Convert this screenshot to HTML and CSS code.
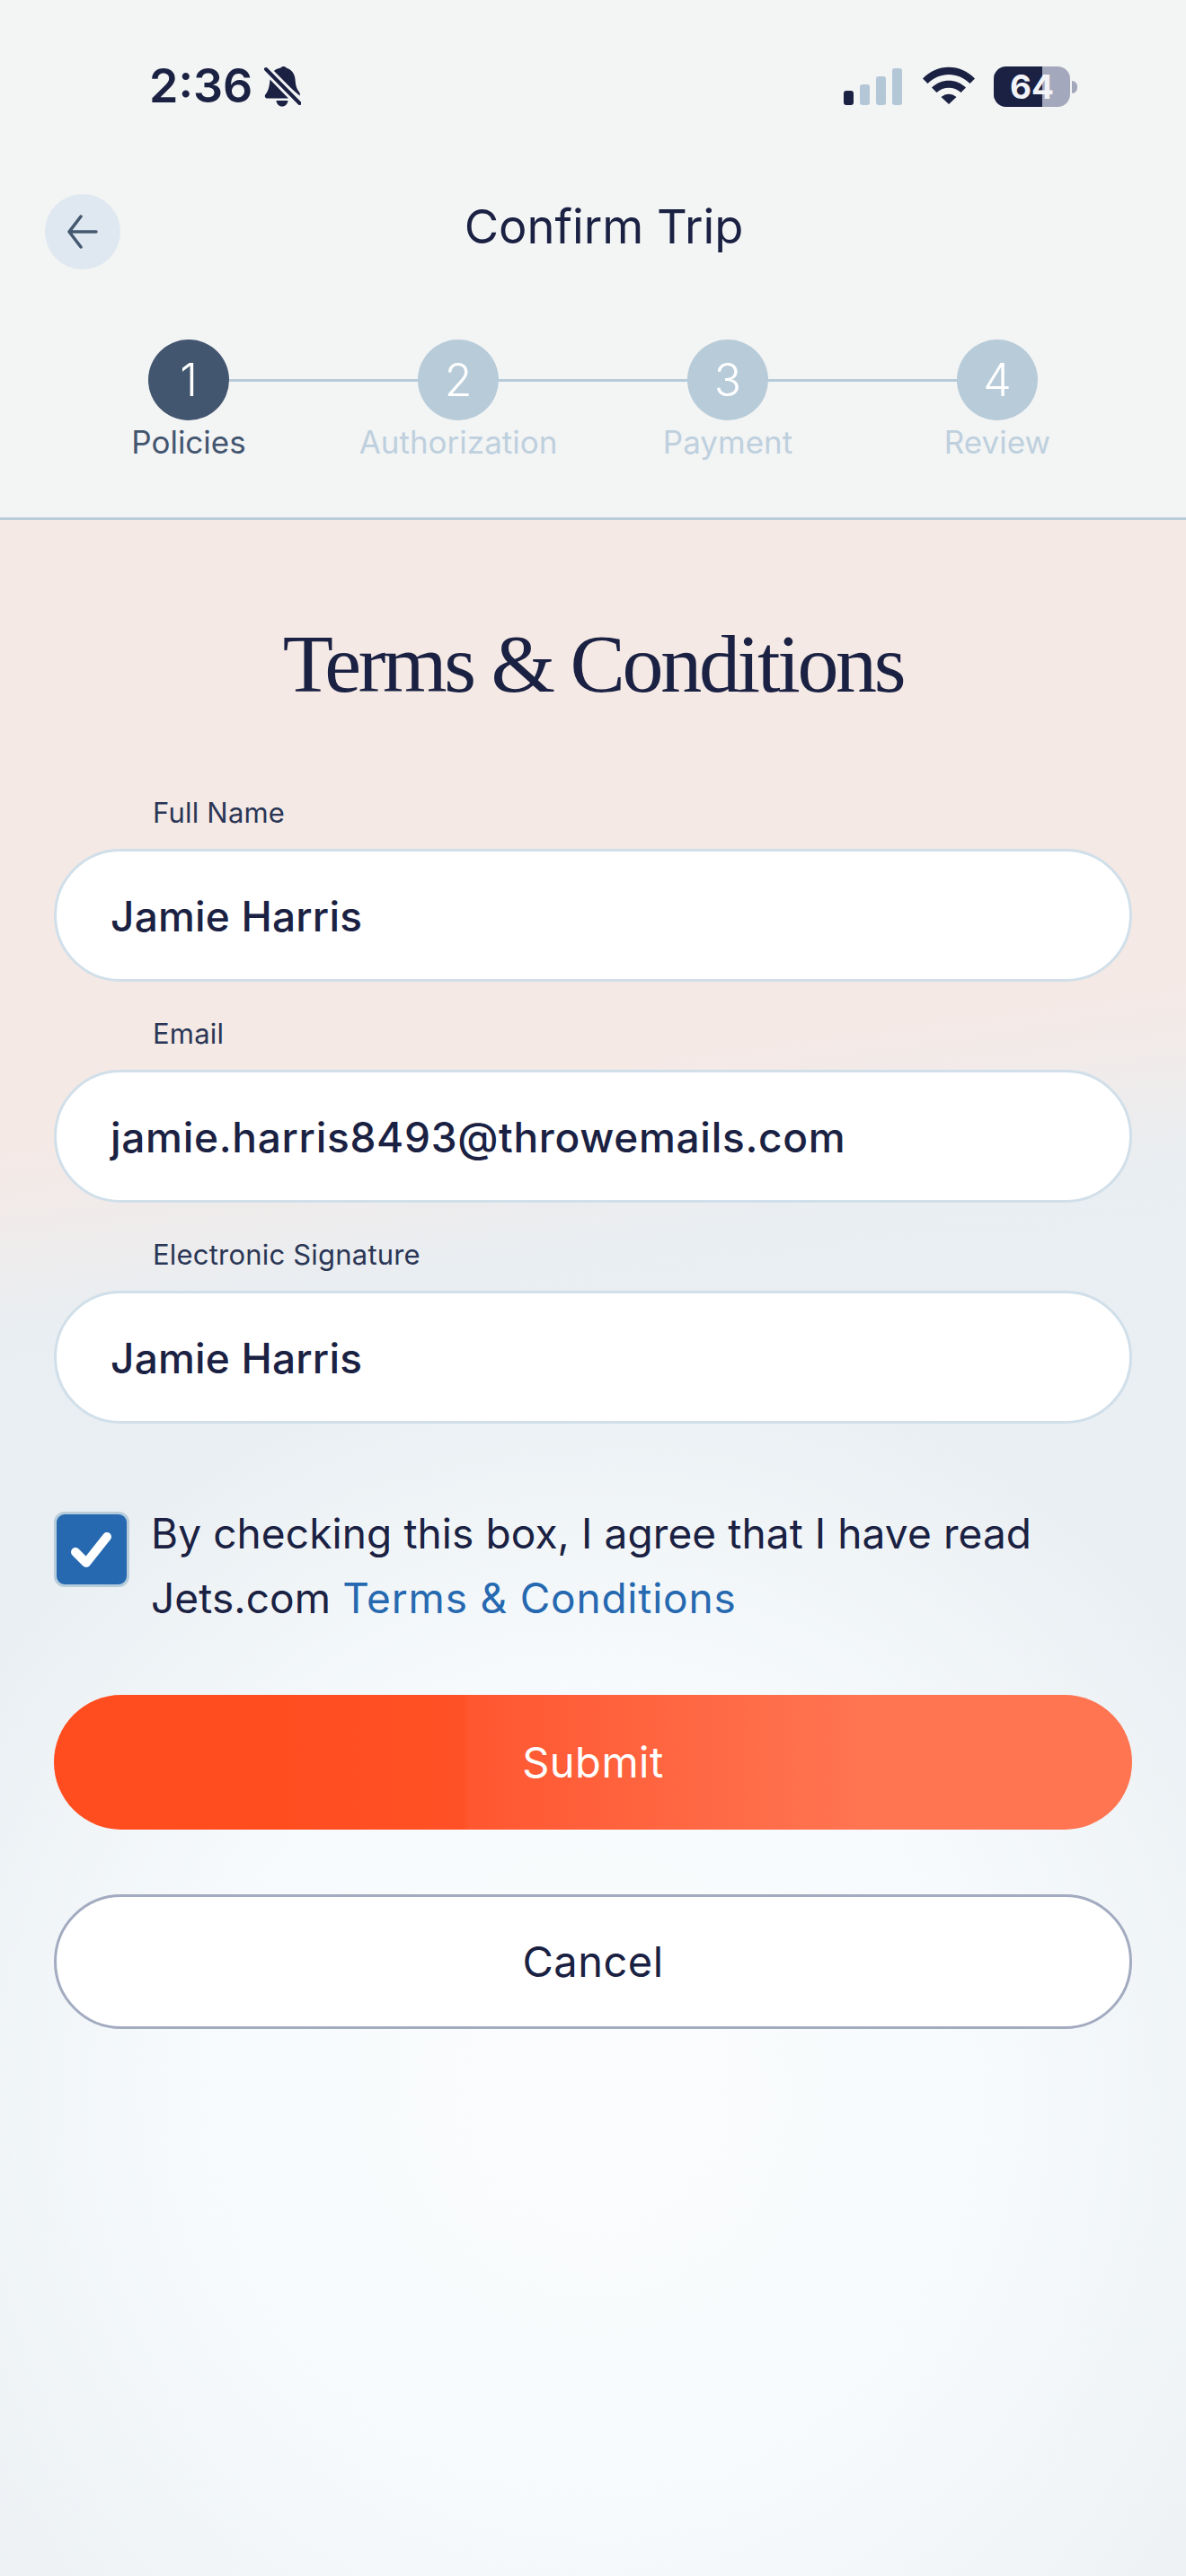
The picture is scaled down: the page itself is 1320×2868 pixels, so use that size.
FILE: index.html
```html
<!DOCTYPE html>
<html lang="en">
<head>
<meta charset="utf-8">
<title>Confirm Trip</title>
<link rel="stylesheet" href="styles.css">
</head>
<body>
<div class="phone">
  <header class="head">
    <div class="status">
      <div class="status-left">
        <span class="time">2:36</span>
        <svg class="bell" viewBox="0 0 41 46" aria-hidden="true">
          <path class="bell-body" d="M9 7C11 4 15 2 18.500 1.500c1.500-2 5-2 6 0C30 3 34 8 34.500 14c.5 6 1 10 4.500 14.500 1 1.500 1 3 .5 4Z"/>
          <path class="bell-body" d="M6.500 14.500 27 35.500H3.500C1 35.500 0 33 1.500 31 5 27 6 21 6.500 14.500Z"/>
          <path class="bell-body" d="M13.500 38h13c-.5 4-3 6.500-6.500 6.500S14 42 13.500 38Z"/>
          <path class="bell-gap" d="M6 3 41 38"/>
          <path class="bell-slash" d="M2 3 39.500 41"/>
        </svg>
      </div>
      <div class="status-right">
        <div class="signal">
          <span class="bar bar-1"></span>
          <span class="bar bar-2"></span>
          <span class="bar bar-3"></span>
          <span class="bar bar-4"></span>
        </div>
        <svg class="wifi" viewBox="0 0 58 42" aria-hidden="true">
          <path d="M0 13.500C16-3.500 42-3.500 58 13.500l-5.500 5.500C39.500 5.500 18.500 5.500 5.500 19Z"/>
          <path d="M10 23.500c10.500-10.500 27.500-10.500 38 0l-5.500 5.500c-7.500-7-19.500-7-27 0Z"/>
          <path d="M20.500 34c5-4.500 12-4.500 17 0L29 42Z"/>
        </svg>
        <div class="battery">
          <div class="battery-body"><span class="battery-fill"></span><span class="battery-num">64</span></div>
          <span class="battery-nub"></span>
        </div>
      </div>
    </div>
    <div class="titlebar">
      <button class="back" type="button" aria-label="Back">
        <svg viewBox="0 0 34 40" aria-hidden="true"><path d="M32 20H2M15 3 2 20l13 17"/></svg>
      </button>
      <h1 class="title">Confirm Trip</h1>
    </div>
    <ol class="steps">
      <li class="step step-active"><span class="dot">1</span><span class="step-label">Policies</span></li>
      <li class="step"><span class="dot">2</span><span class="step-label">Authorization</span></li>
      <li class="step"><span class="dot">3</span><span class="step-label">Payment</span></li>
      <li class="step"><span class="dot">4</span><span class="step-label">Review</span></li>
    </ol>
  </header>
  <main class="content">
    <h2 class="heading">Terms &amp; Conditions</h2>
    <form class="form">
      <div class="field"><span class="field-label">Full Name</span><div class="input input-name">Jamie Harris</div></div>
      <div class="field"><span class="field-label">Email</span><div class="input">jamie.harris8493@throwemails.com</div></div>
      <div class="field"><span class="field-label">Electronic Signature</span><div class="input input-name">Jamie Harris</div></div>
      <div class="agree">
        <span class="check">
          <svg viewBox="0 0 46 40" aria-hidden="true"><path d="M5 23 17 35 40 6"/></svg>
        </span>
        <p class="agree-text">By checking this box, I agree that I have read Jets.com <a class="link">Terms &amp; Conditions</a></p>
      </div>
      <div class="btn btn-primary">Submit</div>
      <div class="btn btn-secondary">Cancel</div>
    </form>
  </main>
</div>
</body>
</html>
```

FILE: styles.css
```css
* { box-sizing: border-box; }
html, body { margin: 0; padding: 0; }
body {
  width: 1320px;
  height: 2868px;
  overflow: hidden;
  font-family: "Inter", "Liberation Sans", sans-serif;
  color: #1a2142;
}
.phone { display: flex; flex-direction: column; height: 2868px; }

.head {
  height: 579px;
  background: #f3f4f4;
  border-bottom: 3px solid #b9ccda;
  flex: none;
}
.status {
  height: 128px;
  padding: 64px 121px 0 166px;
  display: flex;
  justify-content: space-between;
  align-items: flex-start;
}
.status-left { display: flex; align-items: center; gap: 13px; height: 64px; }
.time { font-size: 52px; font-weight: 600; line-height: 64px; }
.bell { width: 41px; height: 46px; margin-top: 2px; }
.bell-body { fill: #1a2142; }
.bell-gap { stroke: #f3f4f4; stroke-width: 4; fill: none; }
.bell-slash { stroke: #1a2142; stroke-width: 4; stroke-linecap: round; fill: none; }
.status-right { display: flex; align-items: flex-start; padding-top: 10px; }
.signal { display: flex; align-items: flex-end; gap: 7px; height: 41px; margin-top: 2px; }
.bar { width: 11px; border-radius: 3px; background: #b4c7d7; }
.bar-1 { height: 16px; background: #1a2142; }
.bar-2 { height: 23px; }
.bar-3 { height: 32px; }
.bar-4 { height: 41px; }
.wifi { width: 58px; height: 42px; margin-left: 23px; fill: #1a2142; }
.battery { display: flex; align-items: center; margin-left: 21px; }
.battery-body {
  position: relative;
  width: 85px;
  height: 45px;
  border-radius: 14px;
  background: #a4a8bc;
  overflow: hidden;
  text-align: center;
}
.battery-fill { position: absolute; left: 0; top: 0; bottom: 0; width: 54px; background: #1a2142; }
.battery-num { position: relative; font-size: 37px; font-weight: 700; line-height: 45px; color: #f2f3f6; }
.battery-nub { width: 6px; height: 14px; background: #a4a8bc; border-radius: 0 7px 7px 0; margin-left: 2px; }

.titlebar { position: relative; height: 250px; display: flex; justify-content: center; align-items: flex-start; }
.back {
  position: absolute;
  left: 50px;
  top: 88px;
  width: 84px;
  height: 84px;
  padding: 0;
  border: 0;
  border-radius: 50%;
  background: #dfe8f0;
  display: flex;
  align-items: center;
  justify-content: center;
}
.back svg { width: 34px; height: 40px; fill: none; stroke: #445870; stroke-width: 3.500; stroke-linecap: round; stroke-linejoin: round; }
.title { margin: 0 0 0 24px; padding-top: 88px; font-size: 52.500px; font-weight: 400; line-height: 72px; text-align: center; }

.steps { list-style: none; margin: 0; padding: 0 60px; display: grid; grid-template-columns: repeat(4, 300px); height: 198px; }
.step { position: relative; display: flex; flex-direction: column; align-items: center; }
.step:not(:last-child)::after {
  content: "";
  position: absolute;
  left: 150px;
  top: 44px;
  width: 300px;
  height: 3px;
  background: #b7ccdb;
}
.dot {
  position: relative;
  z-index: 1;
  width: 90px;
  height: 90px;
  border-radius: 50%;
  background: #b7cbd9;
  color: #fff;
  font-size: 50px;
  font-weight: 300;
  line-height: 90px;
  text-align: center;
}
.step-active .dot { background: #43566f; }
.step-label { margin-top: 1px; font-size: 35px; line-height: 46px; color: #bed0de; white-space: nowrap; }
.step-active .step-label { color: #43566f; }

.content {
  flex: 1;
  padding: 0 60px;
  background:
    radial-gradient(ellipse 820px 850px at 660px 2330px, #fbfcfd 0%, #f6fafc 55%, rgba(240,243,246,0) 100%) 0 -579px / 1320px 2868px no-repeat,
    linear-gradient(172deg, #f5e9e5 0, #f5e9e5 690px, #e9eef2 900px, #eef2f5 100%);
}
.heading {
  margin: 0;
  padding-top: 105px;
  height: 306px;
  font-family: "Liberation Serif", serif;
  font-size: 92px;
  font-weight: 400;
  line-height: 110px;
  text-align: center;
  letter-spacing: -3.300px;
}
.form { display: flex; flex-direction: column; }
.field { display: flex; flex-direction: column; margin-bottom: 38px; }
.field-label { padding-left: 110px; margin-bottom: 20px; font-size: 31px; line-height: 40px; letter-spacing: .2px; color: #2a3655; }
.input {
  height: 148px;
  border: 3px solid #d0dfe9;
  border-radius: 74px;
  background: #fff;
  padding-left: 60px;
  font-size: 46px;
  font-weight: 450;
  line-height: 144px;
  letter-spacing: .7px;
}
.input-name { letter-spacing: .2px; }
.agree { display: flex; gap: 24px; margin-top: 10px; padding-top: 38px; align-items: flex-start; }
.check {
  flex: none;
  width: 84px;
  height: 84px;
  margin-top: 12px;
  border: 3px solid #b7ccdb;
  border-radius: 12px;
  background: #2669b0;
  display: flex;
  align-items: center;
  justify-content: center;
}
.check svg { width: 46px; height: 40px; fill: none; stroke: #fff; stroke-width: 10; stroke-linecap: round; stroke-linejoin: round; }
.agree-text { margin: 0; font-size: 46px; line-height: 72px; width: 1040px; letter-spacing: .1px; }
.link { color: #2669b0; letter-spacing: .8px; }
.btn {
  height: 150px;
  border-radius: 75px;
  text-align: center;
  font-size: 47px;
  letter-spacing: .5px;
  line-height: 150px;
}
.btn-primary {
  margin-top: 72px;
  background: linear-gradient(90deg, #ff4d1f 0%, #ff4d1f 20%, #ff5126 38%, #ff5730 38.500%, #ff6844 60%, #ff7552 76%, #ff7552 100%);
  color: #fff;
}
.btn-secondary {
  margin-top: 72px;
  background: #fff;
  border: 3px solid #a3abc0;
  line-height: 144px;
}
```
